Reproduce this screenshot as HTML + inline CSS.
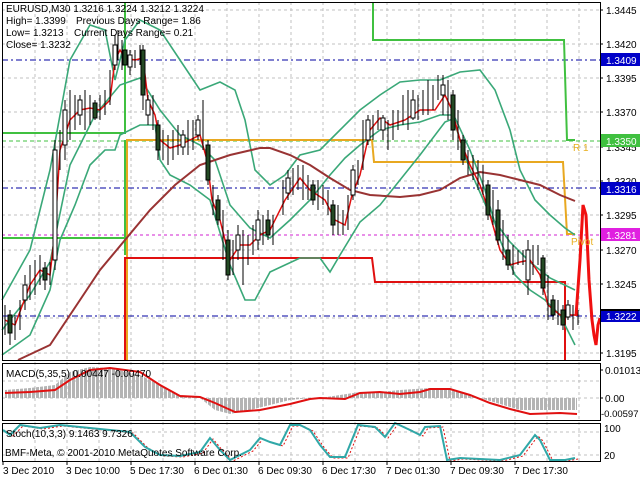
<!DOCTYPE html>
<html><head><meta charset="utf-8"><style>
html,body{margin:0;padding:0;background:#fff;width:640px;height:480px;overflow:hidden}
svg{display:block}
text{font-family:"Liberation Sans",sans-serif;font-size:10px;fill:#000}
.ax{font-size:10px}
</style></head><body>
<svg width="640" height="480" viewBox="0 0 640 480" xmlns="http://www.w3.org/2000/svg">
<defs>
<pattern id="st" width="4" height="10" patternUnits="userSpaceOnUse"><rect x="0" y="0" width="3" height="10" fill="#b4b4b4"/></pattern>
</defs>
<rect width="640" height="480" fill="#fff"/>
<g stroke="#c0c0c0" stroke-dasharray="3,3" stroke-width="1">
<path d="M35 2V462M67 2V462M99 2V462M131 2V462M163 2V462M195 2V462M227 2V462M259 2V462M291 2V462M323 2V462M355 2V462M387 2V462M419 2V462M451 2V462M483 2V462M515 2V462M547 2V462M579 2V462"/>
<path d="M2 10H600M2 44H600M2 78H600M2 112H600M2 147H600M2 181H600M2 215H600M2 250H600M2 284H600M2 318H600M2 353H600M2 381H600M2 398H600M2 432H600M2 455H600"/>
</g>
<g fill="none">
<path d="M2 60H600" stroke="#0000a0" stroke-dasharray="6,3,2,3"/>
<path d="M2 188H600" stroke="#0000a0" stroke-dasharray="6,3,2,3"/>
<path d="M2 316H600" stroke="#0000a0" stroke-dasharray="6,3,2,3"/>
<path d="M2 141H600" stroke="#40c040" stroke-dasharray="4,3"/>
<path d="M2 235H600" stroke="#d020d0" stroke-dasharray="3,3"/>
<path d="M2 133H125V2" stroke="#40c040" stroke-width="2"/>
<path d="M2 238H125" stroke="#40c040" stroke-width="2"/>
<path d="M125 140V255" stroke="#40c040" stroke-width="2"/>
<path d="M373 2V40H564L567 140H575" stroke="#40c040" stroke-width="2"/>
<path d="M127 360V140H372L374 162H563L567 234H575" stroke="#e8a820" stroke-width="2"/>
<path d="M125 360V258H372L375 282H565V360" stroke="#e01010" stroke-width="2"/>
<g stroke="#3aa878" stroke-width="1.6">
<polyline points="2,300 30,250 50,170 70,60 90,25 105,30 115,80 125,40 140,20 160,30 180,60 200,90 220,82 235,90 245,120 255,170 270,185 285,175 300,155 320,150 340,130 360,110 380,95 400,82 420,80 440,80 460,72 480,70 495,90 510,130 520,170 535,200 550,215 565,228 575,235"/>
<polyline points="2,355 30,335 50,290 60,240 75,205 90,165 105,150 115,150 120,135 140,125 155,125 160,160 170,175 190,185 210,200 230,265 245,300 255,300 270,272 285,265 300,258 320,258 330,272 340,255 360,222 380,205 400,180 420,155 445,122 455,118 470,150 485,190 500,240 515,275 530,290 545,300 560,315 575,345"/>
<polyline points="2,330 30,295 50,262 70,165 95,115 120,85 140,78 160,110 180,135 200,145 215,160 230,205 250,228 270,238 290,220 310,200 330,175 345,158 360,145 380,130 400,125 420,122 440,115 452,115 470,170 490,215 510,242 530,262 550,278 575,290"/>
</g>
<polyline points="18,360 50,345 80,300 100,270 125,240 150,210 175,185 200,165 230,155 260,148 270,148 290,155 310,165 330,178 350,190 370,195 400,197 420,195 440,190 460,178 480,172 500,175 520,180 540,185 560,195 575,201" stroke="#993333" stroke-width="2"/>
<polyline points="5,320 15,325 30,285 40,270 50,275 55,230 60,150 70,120 80,110 90,108 100,110 110,100 115,60 120,50 125,58 135,60 143,58 148,100 155,115 160,140 170,148 180,145 190,140 200,135 207,160 212,200 220,220 230,260 240,245 250,245 260,235 270,230 285,200 300,178 310,190 325,200 335,220 345,225 352,195 360,175 370,130 380,118 390,125 405,120 420,110 435,110 445,95 452,110 460,140 470,165 480,185 490,215 500,250 510,265 520,262 530,260 540,275 548,305 560,315 575,315" stroke="#e01010" stroke-width="1.5"/>
<path stroke="#000" stroke-width="1" d="M5 305V335M10 310V345M15 315V340M20 300V330M25 275V310M30 265V300M35 260V295M40 255V285M45 262V290M50 262V285M55 140V270M60 130V170M65 100V160M70 90V140M75 95V130M80 95V125M85 90V130M90 95V125M95 100V120M100 95V120M105 90V115M110 70V105M115 35V70M118 30V60M122 40V70M130 50V75M135 50V68M140 45V65M143 45V110M148 95V125M153 95V130M158 120V160M163 130V160M168 135V165M173 130V160M178 125V155M183 130V155M188 120V155M193 120V150M198 115V140M203 100V150M208 140V185M213 185V215M218 195V225M223 210V260M228 230V280M233 240V275M238 225V260M243 230V285M248 235V265M253 225V255M258 210V250M263 215V245M268 210V240M273 215V245M283 180V215M288 170V200M293 168V195M298 165V190M303 165V200M308 175V200M313 180V205M318 180V210M323 185V205M328 190V215M333 200V235M338 205V235M343 210V235M348 195V230M353 165V200M358 160V185M363 120V170M368 115V145M373 115V140M378 110V130M383 115V140M388 120V150M393 110V140M398 110V130M403 95V125M408 90V130M413 90V120M418 95V120M423 90V115M428 80V115M433 85V110M438 75V100M443 75V115M448 80V120M453 90V140M458 110V150M463 135V165M468 150V175M473 155V180M478 160V190M483 165V195M488 180V220M493 190V225M498 200V245M503 220V260M508 235V270M513 245V275M518 250V265M523 250V265M528 240V295M533 245V275M538 245V265M543 255V295M548 275V320M553 295V320M558 300V325M563 305V330M568 300V320M573 305V330M578 310V325"/>
<g fill="#fff" stroke="#000">
<rect x="23" y="285" width="4" height="15"/><rect x="53" y="150" width="4" height="110"/><rect x="63" y="110" width="4" height="35"/><rect x="78" y="100" width="4" height="15"/><rect x="113" y="45" width="4" height="20"/><rect x="128" y="55" width="4" height="12"/><rect x="146" y="100" width="4" height="15"/><rect x="181" y="135" width="4" height="12"/><rect x="196" y="120" width="4" height="15"/><rect x="236" y="235" width="4" height="15"/><rect x="256" y="220" width="4" height="20"/><rect x="286" y="178" width="4" height="15"/><rect x="351" y="170" width="4" height="25"/><rect x="366" y="120" width="4" height="20"/><rect x="381" y="118" width="4" height="12"/><rect x="411" y="100" width="4" height="18"/><rect x="441" y="85" width="4" height="10"/><rect x="526" y="250" width="4" height="30"/><rect x="566" y="305" width="4" height="12"/>
</g>
<g fill="#244a24" stroke="#000">
<rect x="8" y="315" width="4" height="18"/><rect x="43" y="268" width="4" height="12"/><rect x="93" y="103" width="4" height="15"/><rect x="123" y="50" width="4" height="15"/><rect x="141" y="50" width="4" height="45"/><rect x="156" y="125" width="4" height="25"/><rect x="206" y="145" width="4" height="35"/><rect x="216" y="200" width="4" height="20"/><rect x="226" y="240" width="4" height="35"/><rect x="266" y="220" width="4" height="15"/><rect x="311" y="185" width="4" height="15"/><rect x="331" y="205" width="4" height="20"/><rect x="451" y="95" width="4" height="35"/><rect x="461" y="140" width="4" height="20"/><rect x="486" y="185" width="4" height="30"/><rect x="496" y="210" width="4" height="30"/><rect x="506" y="250" width="4" height="15"/><rect x="541" y="258" width="4" height="30"/><rect x="551" y="300" width="4" height="15"/><rect x="561" y="310" width="4" height="15"/>
</g>
<polyline points="576,316 580,260 583,205 586,215 589,280 592,320 594,335 596,345 598,325 600,318" stroke="#f01010" stroke-width="3"/>
</g>
<text x="573" y="151" style="fill:#e8b020">R 1</text>
<text x="571" y="245" style="fill:#e8b020">Pivot</text>
<polygon points="5,398 5,390 30,388 55,385 70,372 90,367 110,368 140,375 160,385 180,395 200,398 215,410 230,414 250,410 270,405 290,400 300,399 320,398 340,395 360,392 380,392 400,390 430,388 450,390 470,395 480,398 500,404 520,410 540,410 577,410 577,398" fill="url(#st)"/>
<polyline points="5,393 30,392 55,390 70,380 90,370 110,368 140,372 160,385 180,396 200,397 215,403 235,412 260,410 290,404 310,399 320,398 345,399 360,393 380,392 400,394 420,392 430,389 450,389 470,395 490,403 510,409 530,414 560,413 577,414" fill="none" stroke="#e01010" stroke-width="2"/>
<polyline points="3,430 10,435 20,425 40,428 60,425 80,427 110,430 130,432 145,447 160,455 180,456 200,452 210,438 220,450 230,460 240,455 250,450 260,438 270,442 280,445 290,425 300,425 310,430 320,445 330,457 345,457 358,425 375,427 385,437 395,423 410,430 420,435 425,427 440,426 447,460 460,458 500,460 520,455 535,435 540,440 550,460 565,460 575,458" fill="none" stroke="#e01010" stroke-width="1" stroke-dasharray="2,2" transform="translate(3,1)"/>
<polyline points="3,430 10,435 20,425 40,428 60,425 80,427 110,430 130,432 145,447 160,455 180,456 200,452 210,438 220,450 230,460 240,455 250,450 260,438 270,442 280,445 290,425 300,425 310,430 320,445 330,457 345,457 358,425 375,427 385,437 395,423 410,430 420,435 425,427 440,426 447,460 460,458 500,460 520,455 535,435 540,440 550,460 565,460 575,458" fill="none" stroke="#30a8a8" stroke-width="2"/>
<g fill="none" stroke="#000" stroke-width="1">
<rect x="2.5" y="2.5" width="598" height="358"/>
<rect x="2.5" y="363.5" width="598" height="57"/>
<rect x="2.5" y="423.5" width="598" height="38"/>
</g>
<path stroke="#000" d="M600 10h3M600 44h3M600 78h3M600 112h3M600 147h3M600 181h3M600 215h3M600 250h3M600 284h3M600 318h3M600 353h3M600 370h3M600 398h3M3 462v3M67 462v3M131 462v3M195 462v3M259 462v3M323 462v3M387 462v3M451 462v3M515 462v3"/>
<g class="ax">
<text x="606" y="14">1.3445</text>
<text x="606" y="48">1.3420</text>
<text x="606" y="82">1.3395</text>
<text x="606" y="116">1.3370</text>
<text x="606" y="151">1.3345</text>
<text x="606" y="185">1.3320</text>
<text x="606" y="219">1.3295</text>
<text x="606" y="254">1.3270</text>
<text x="606" y="288">1.3245</text>
<text x="606" y="357">1.3195</text>
</g>
<rect x="601" y="53" width="39" height="13" fill="#0000c8"/><text x="606" y="64" style="fill:#fff">1.3409</text>
<rect x="601" y="134" width="39" height="13" fill="#40c040"/><text x="606" y="145" style="fill:#fff">1.3350</text>
<rect x="601" y="182" width="39" height="13" fill="#0000c8"/><text x="606" y="193" style="fill:#fff">1.3316</text>
<rect x="601" y="228" width="39" height="13" fill="#e020e0"/><text x="606" y="239" style="fill:#fff">1.3281</text>
<rect x="601" y="309" width="39" height="13" fill="#0000c8"/><rect x="601" y="309" width="39" height="2" fill="#000"/><text x="606" y="320" style="fill:#fff">1.3222</text>
<text x="605" y="374">0.01013</text>
<text x="605" y="402">0.00</text>
<text x="601" y="417" style="font-size:9.5px">-0.00597</text>
<text x="604" y="432">100</text>
<text x="604" y="459">20</text>
<g class="ax">
<text x="3" y="474">3 Dec 2010</text>
<text x="66" y="474">3 Dec 10:00</text>
<text x="130" y="474">5 Dec 17:30</text>
<text x="194" y="474">6 Dec 01:30</text>
<text x="258" y="474">6 Dec 09:30</text>
<text x="322" y="474">6 Dec 17:30</text>
<text x="386" y="474">7 Dec 01:30</text>
<text x="450" y="474">7 Dec 09:30</text>
<text x="514" y="474">7 Dec 17:30</text>
</g>
<text x="6" y="12">EURUSD,M30  1.3216 1.3224 1.3212 1.3224</text>
<text x="6" y="24">High= 1.3399</text><text x="76" y="24">Previous Days Range= 1.86</text>
<text x="6" y="36">Low= 1.3213</text><text x="74" y="36">Current Days Range= 0.21</text>
<text x="6" y="48">Close= 1.3232</text>
<text x="6" y="377">MACD(5,35,5) 0.00447 -0.00470</text>
<text x="6" y="437">Stoch(10,3,3) 9.1463 9.7326</text>
<text x="5" y="456">BMF-Meta, © 2001-2010 MetaQuotes Software Corp.</text>
</svg>
</body></html>
